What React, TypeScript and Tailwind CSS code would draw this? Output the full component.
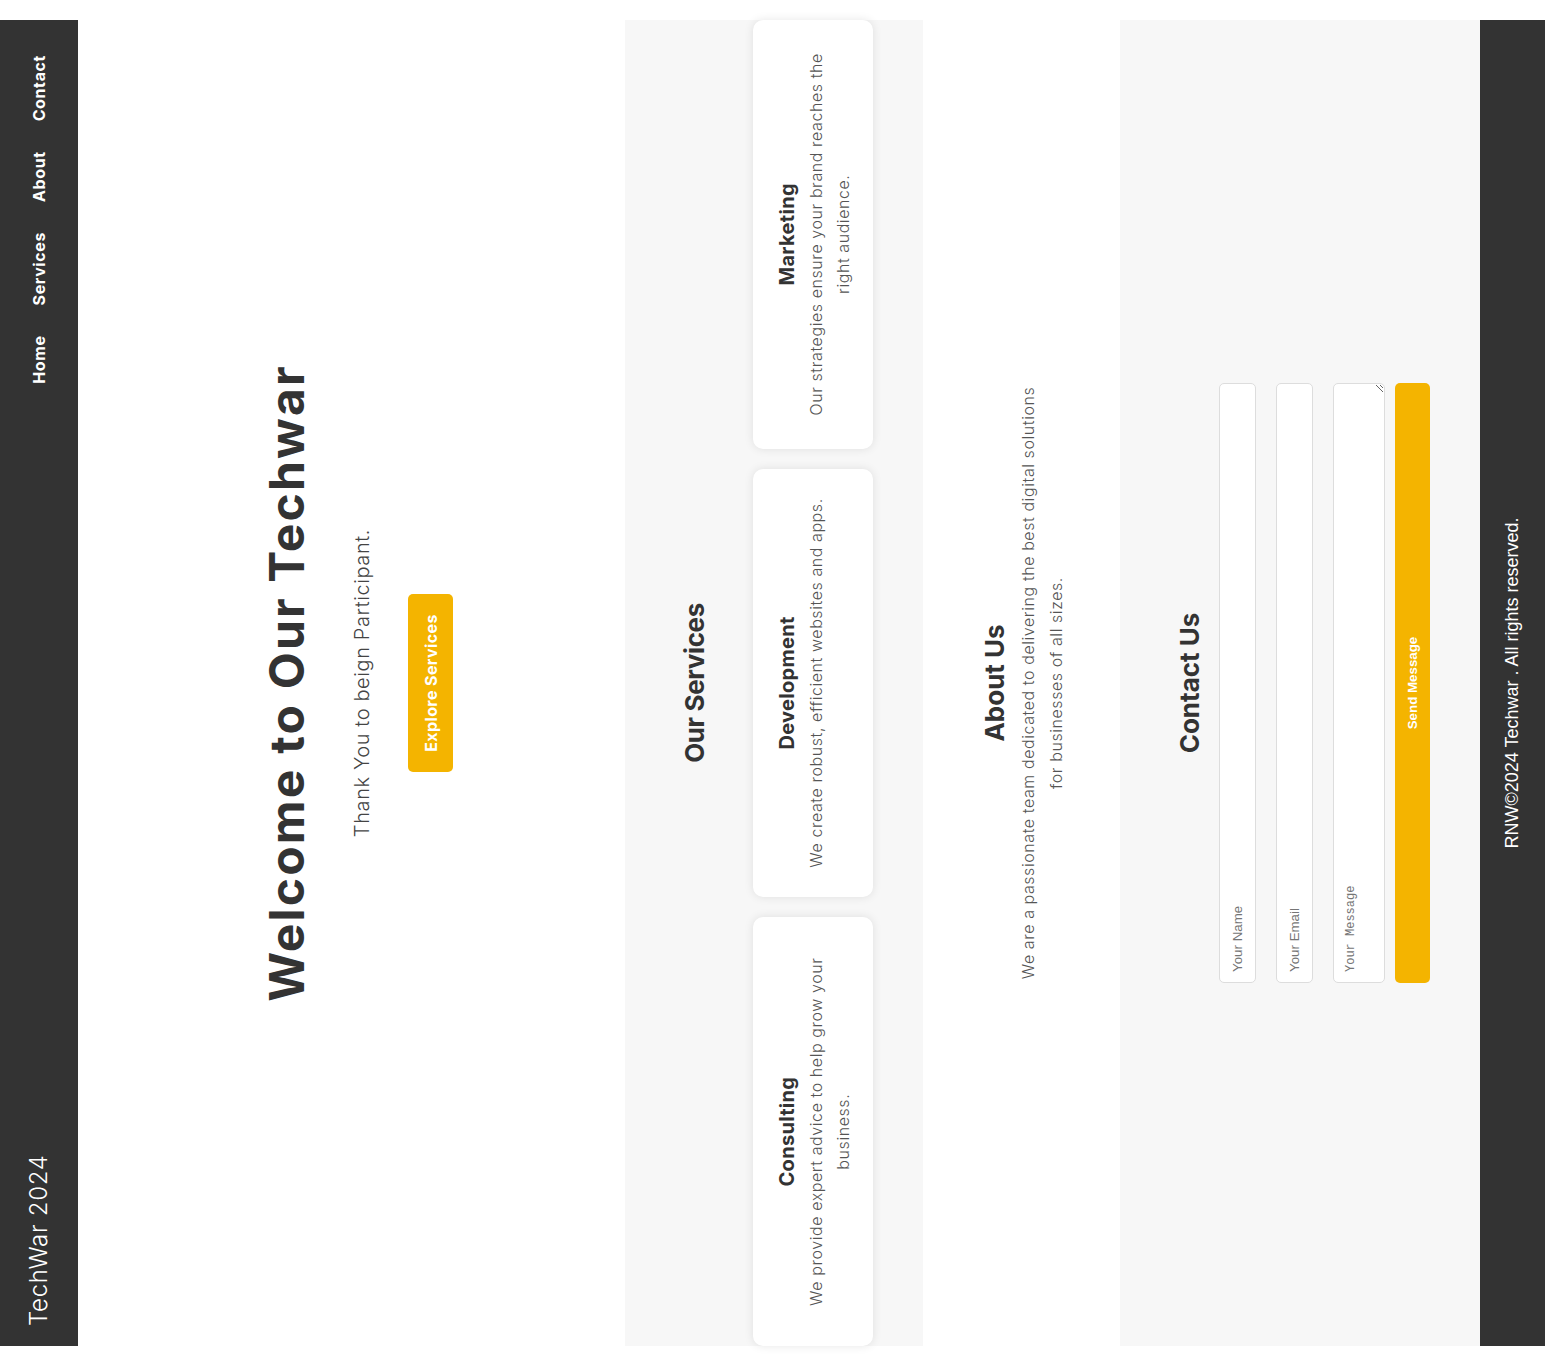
import React from "react";

const services = [
  { title: "Consulting", text: "We provide expert advice to help grow your business." },
  { title: "Development", text: "We create robust, efficient websites and apps." },
  { title: "Marketing", text: "Our strategies ensure your brand reaches the right audience." },
];

export default function App() {
  return (
    <div className="w-[1545px] h-[1366px] overflow-hidden bg-white">
      <div className="w-[1326px] h-[1545px] origin-top-left [transform:translateY(1346px)_rotate(-90deg)] font-['Inter',sans-serif] text-[#333]">
        <header className="h-[78px] bg-[#333] flex items-center justify-between px-5">
          <div className="text-[24px] font-light text-white leading-none tracking-[0.7px]">TechWar 2024</div>
          <nav>
            <ul className="flex">
              {["Home", "Services", "About", "Contact"].map((l) => (
                <li key={l} className="mx-[15px]">
                  <a href="#" className="text-white font-bold text-[16px] tracking-[0.6px]">
                    {l}
                  </a>
                </li>
              ))}
            </ul>
          </nav>
        </header>

        <section className="h-[547px] bg-white flex flex-col items-center pt-[180px]">
          <h1 className="text-[48px] font-bold leading-[58px] tracking-[2.2px] text-[#333]">Welcome to Our Techwar</h1>
          <p className="mt-[34px] text-[20px] font-light leading-[24px] tracking-[0.6px] text-[#444]">
            Thank You to beign Participant.
          </p>
          <button className="mt-[34px] h-[45px] px-5 bg-[#f4b400] text-white font-bold text-[16px] tracking-[0.4px] rounded-[5px]">
            Explore Services
          </button>
        </section>

        <section className="h-[298px] bg-[#f7f7f7] pt-[54px] flex flex-col">
          <h2 className="text-center text-[26px] font-bold leading-[31px] tracking-[-0.4px] text-[#333]">Our Services</h2>
          <div className="mt-[43px] flex gap-5">
            {services.map((s) => (
              <div
                key={s.title}
                className="flex-1 h-[120px] bg-white rounded-[10px] shadow-[0_0_10px_rgba(0,0,0,0.1)] px-5 pt-[23px] text-center"
              >
                <h3 className="text-[20px] font-bold leading-[23px] tracking-[0.3px] text-[#333]">{s.title}</h3>
                <p className="mt-[4px] text-[16px] font-light leading-[26.5px] tracking-[0.57px] text-[#555]">{s.text}</p>
              </div>
            ))}
          </div>
        </section>

        <section className="h-[197px] bg-white pt-[56px] flex flex-col items-center">
          <h2 className="text-center text-[26px] font-bold leading-[31px] text-[#333]">About Us</h2>
          <p className="mt-[4px] w-[600px] text-center text-[16px] font-light leading-[28px] tracking-[0.57px] text-[#555]">
            We are a passionate team dedicated to delivering the best digital solutions for businesses of all sizes.
          </p>
        </section>

        <section className="h-[360px] bg-[#f7f7f7] pt-[54px] flex flex-col items-center">
          <h2 className="text-center text-[26px] font-bold leading-[31px] text-[#333]">Contact Us</h2>
          <form className="mt-[14px] w-[600px] flex flex-col">
            <input
              type="text"
              placeholder="Your Name"
              className="h-[37px] px-[10px] bg-white border border-[#ddd] rounded-[5px] font-['Liberation_Sans',sans-serif] text-[13.33px] placeholder:text-[#757575]"
            />
            <input
              type="email"
              placeholder="Your Email"
              className="mt-5 h-[37px] px-[10px] bg-white border border-[#ddd] rounded-[5px] font-['Liberation_Sans',sans-serif] text-[13.33px] placeholder:text-[#757575]"
            />
            <textarea
              placeholder="Your Message"
              className="mt-5 h-[52px] p-[10px] bg-white border border-[#ddd] rounded-[5px] font-['Liberation_Mono',monospace] text-[12px] leading-[15px] placeholder:text-[#757575]"
            />
            <button
              type="button"
              className="mt-[10px] h-[35px] bg-[#f4b400] text-white font-bold rounded-[5px] font-['Liberation_Sans',sans-serif] text-[13.33px]"
            >
              Send Message
            </button>
          </form>
        </section>

        <footer className="h-[65px] bg-[#333] flex items-center justify-center">
          <p className="text-white text-[18px] font-['Liberation_Sans',sans-serif]">RNW©2024 Techwar . All rights reserved.</p>
        </footer>
      </div>
    </div>
  );
}
